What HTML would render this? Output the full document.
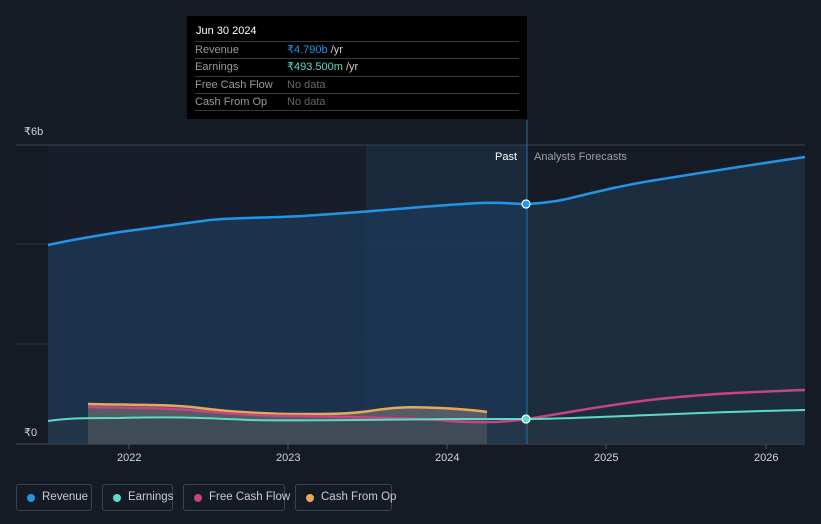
<!DOCTYPE html>
<html><head><meta charset="utf-8"><style>
body{margin:0;width:821px;height:524px;background:#151b25;font-family:"Liberation Sans",sans-serif;overflow:hidden;position:relative}
.tip{position:absolute;left:187px;top:16px;width:340px;height:103px;background:#000;color:#fff;font-size:11px}
.tip .h{position:absolute;left:9px;top:9px}
.row{position:absolute;left:8px;width:324px;height:17px;border-top:1px solid #3a3a3a;color:#9a9a9a;line-height:17px}
.row span{position:absolute;left:92px}
.leg{position:absolute;top:484px;height:27px;border:1px solid #3c4350;border-radius:3px;color:#c8ccd2;font-size:11.5px;line-height:25px;box-sizing:border-box;padding-left:25px;white-space:nowrap}
.leg i{position:absolute;left:10px;top:9px;width:8px;height:8px;border-radius:50%}
</style></head><body>
<svg width="821" height="524" style="position:absolute;left:0;top:0">
<rect x="48" y="145" width="318" height="299" fill="#171e29"/>
<rect x="366" y="145" width="161" height="299" fill="#1a2a3c"/>
<line x1="16" y1="145" x2="805" y2="145" stroke="#3a4250"/>
<line x1="16" y1="244" x2="805" y2="244" stroke="#2c333f"/>
<line x1="16" y1="344" x2="805" y2="344" stroke="#2c333f"/>
<line x1="16" y1="444" x2="805" y2="444" stroke="#4a515c"/>
<path d="M48,245 C70,240 95,236 120,232 C150,228 180,224 210,220 C230,218 250,218 280,217 C310,216 330,214 360,212 C400,209 440,205 480,203 C500,202 515,204 527,204 L527,444 L48,444Z" fill="#1c3a58" opacity=".75"/>
<path d="M527,204 C545,203 560,201 575,197 C600,191 620,186 650,181 C700,173 750,165 805,157 L805,444 L527,444Z" fill="#1d2d40"/>
<path d="M48,245 C70,240 95,236 120,232 C150,228 180,224 210,220 C230,218 250,218 280,217 C310,216 330,214 360,212 C400,209 440,205 480,203 C500,202 515,204 527,204 C545,203 560,201 575,197 C600,191 620,186 650,181 C700,173 750,165 805,157" fill="none" stroke="#2394e6" stroke-width="2.5"/>
<path d="M88,404 C130,405 170,404 200,408 C230,412 270,414 300,414 C330,414 350,414 370,411 C400,406 420,407 440,408 C460,409 475,410 487,412 L487,444 L88,444Z" fill="#6e6e72" opacity=".7"/>
<path d="M48,421 C70,418 80,418 120,418 C180,416 220,419 250,420 C300,421 350,420 450,419 C490,419 510,419 527,419 C560,419 600,417 650,415 C700,413 750,411 805,410 L805,444 L48,444Z" fill="#2a3a44" opacity=".5"/>
<path d="M88,404 C130,405 170,404 200,408 C230,412 270,414 300,414 C330,414 350,414 370,411 C400,406 420,407 440,408 C460,409 475,410 487,412" fill="none" stroke="#e8a85a" stroke-width="2.5"/>
<path d="M88,407 C130,408 170,408 200,411 C240,415 270,416 300,416 C350,417 400,418 440,420 C470,423 500,423 527,419 C560,414 600,406 650,400 C700,394 750,392 805,390" fill="none" stroke="#c6447f" stroke-width="2.5"/>
<path d="M48,421 C70,418 80,418 120,418 C180,416 220,419 250,420 C300,421 350,420 450,419 C490,419 510,419 527,419 C560,419 600,417 650,415 C700,413 750,411 805,410" fill="none" stroke="#5fd9c9" stroke-width="2"/>
<line x1="527" y1="120" x2="527" y2="444" stroke="#2a6fa8"/>
<circle cx="526" cy="204" r="4" fill="#2394e6" stroke="#fff" stroke-width="1.2"/>
<circle cx="526" cy="419" r="4" fill="#5fd9c9" stroke="#fff" stroke-width="1.2"/>
<g fill="#d0d4da" font-size="11" font-family="Liberation Sans">
<text x="24" y="135">₹6b</text><text x="24" y="436">₹0</text>
<text x="117" y="461">2022</text><text x="276" y="461">2023</text><text x="435" y="461">2024</text><text x="594" y="461">2025</text><text x="754" y="461">2026</text>
<text x="495" y="160" fill="#fff">Past</text><text x="534" y="160" fill="#9aa0a8">Analysts Forecasts</text>
</g>
<g stroke="#4a515c"><line x1="129" y1="444" x2="129" y2="449"/><line x1="288" y1="444" x2="288" y2="449"/><line x1="447" y1="444" x2="447" y2="449"/><line x1="606" y1="444" x2="606" y2="449"/><line x1="766" y1="444" x2="766" y2="449"/></g>
</svg>
<div class="tip"><div class="h">Jun 30 2024</div>
<div class="row" style="top:25px">Revenue<span style="color:#2394e6">₹4.790b <b style="font-weight:normal;color:#ccc">/yr</b></span></div>
<div class="row" style="top:42px">Earnings<span style="color:#5fd9c9">₹493.500m <b style="font-weight:normal;color:#ccc">/yr</b></span></div>
<div class="row" style="top:60px">Free Cash Flow<span style="color:#666">No data</span></div>
<div class="row" style="top:77px">Cash From Op<span style="color:#666">No data</span></div>
<div class="row" style="top:94px;height:0"></div>
</div>
<div class="leg" style="left:16px;width:76px"><i style="background:#2394e6"></i>Revenue</div>
<div class="leg" style="left:102px;width:71px"><i style="background:#5fd9c9"></i>Earnings</div>
<div class="leg" style="left:183px;width:102px"><i style="background:#c6447f"></i>Free Cash Flow</div>
<div class="leg" style="left:295px;width:97px"><i style="background:#e8a85a"></i>Cash From Op</div>
</body></html>
